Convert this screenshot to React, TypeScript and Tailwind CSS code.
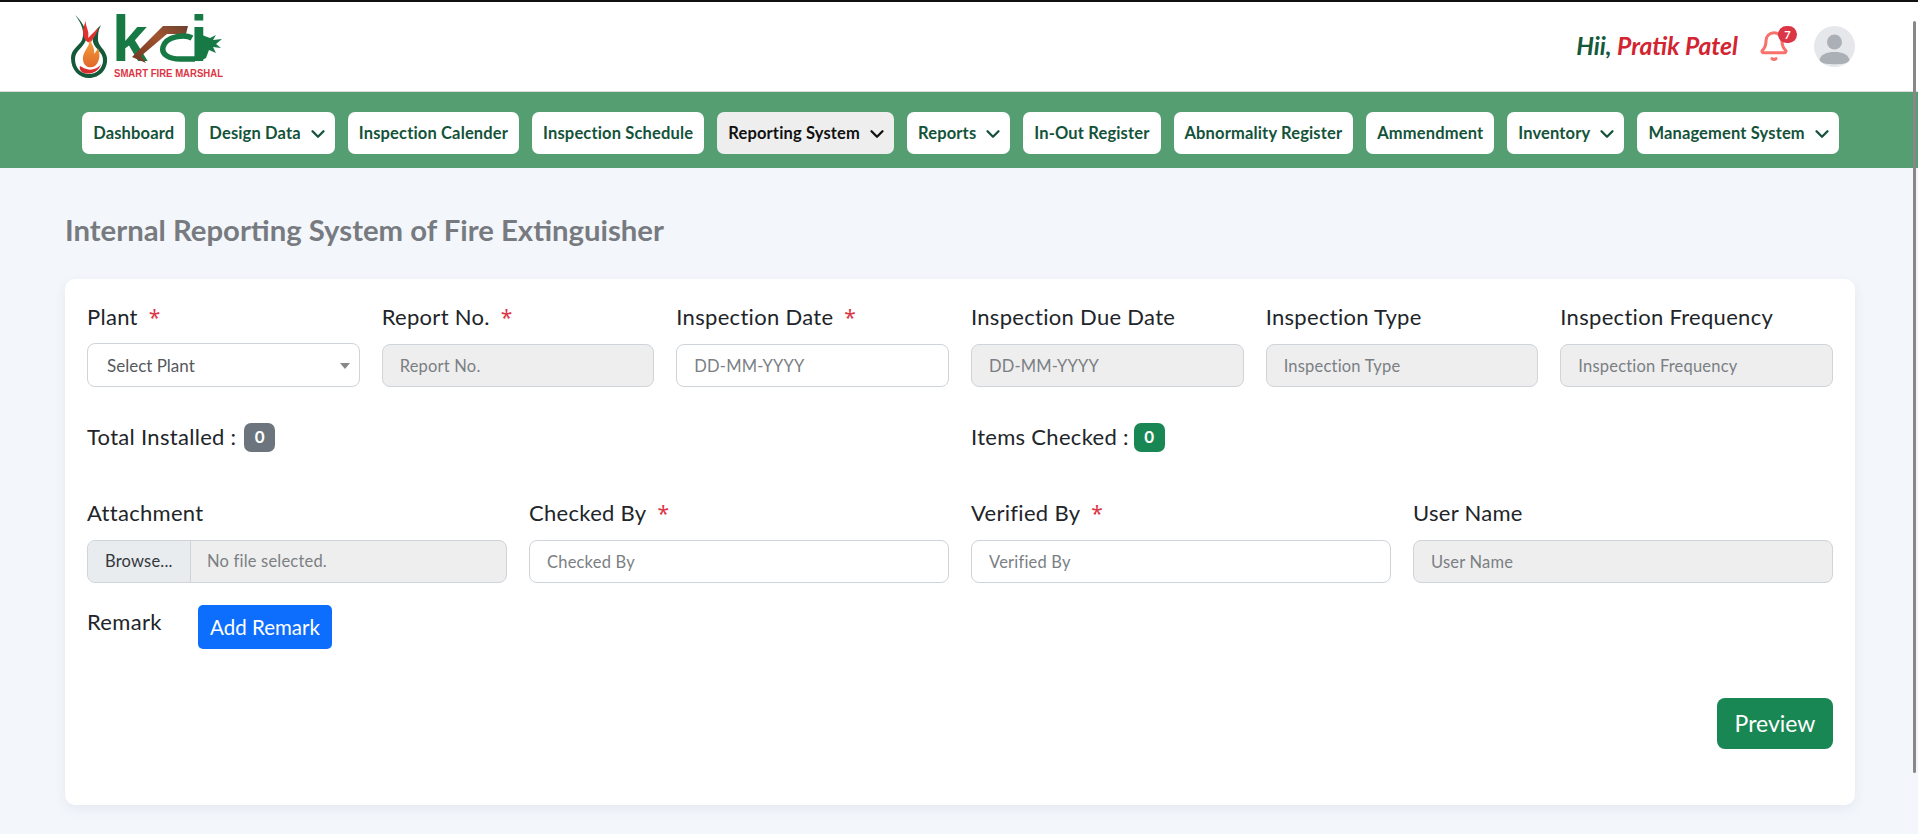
import React from 'react';
import { ChevronDown } from 'lucide-react';

const navItems = [
  { label: 'Dashboard' },
  { label: 'Design Data', caret: true },
  { label: 'Inspection Calender' },
  { label: 'Inspection Schedule' },
  { label: 'Reporting System', caret: true, active: true },
  { label: 'Reports', caret: true },
  { label: 'In-Out Register' },
  { label: 'Abnormality Register' },
  { label: 'Ammendment' },
  { label: 'Inventory', caret: true },
  { label: 'Management System', caret: true },
];

function Star() {
  return <span className="font-['Noto_Sans',sans-serif] text-[#dc3545] text-[21px] ml-[11px] tracking-normal">*</span>;
}

function Field({ label, required, placeholder, disabled }: { label: string; required?: boolean; placeholder: string; disabled?: boolean }) {
  return (
    <div>
      <label className="block text-[22px] tracking-[0.3px] leading-[30px] text-[#212529] mb-[12px]">
        {label}
        {required && <Star />}
      </label>
      <input
        readOnly
        placeholder={placeholder}
        className={`w-full h-[43px] rounded-[8px] border border-[#ced4da] px-[17px] text-[16.5px] tracking-[0.2px] outline-none placeholder:text-[#7b7f84] ${disabled ? 'bg-[#eeeeee]' : 'bg-white'}`}
      />
    </div>
  );
}

function Logo() {
  return (
    <svg width="156" height="78" viewBox="0 0 156 78" overflow="visible">
      <defs>
        <linearGradient id="brown" x1="0" y1="1" x2="1" y2="0">
          <stop offset="0" stopColor="#6f3524" />
          <stop offset="0.6" stopColor="#a0552f" />
          <stop offset="1" stopColor="#6b4030" />
        </linearGradient>
        <linearGradient id="orange" x1="0" y1="1" x2="0" y2="0">
          <stop offset="0" stopColor="#e0682a" />
          <stop offset="1" stopColor="#f4a03a" />
        </linearGradient>
      </defs>
      {/* flame */}
      <path d="M5 13 C12 22 15 30 12 38 C9 44 1 47 1 56 C1 68 9 76 19 76 C30 76 38 67 37 56 C36 47 27 44 28 36 C28 30 29 27 31 23 C25 28 22 34 23 40 C25 47 33 50 33 58 C33 66 27 72 19 72 C11 72 5 66 5 57 C5 49 13 46 16 38 C18 30 13 20 5 13Z" fill="#14593a" />
      <path d="M16 15 C14 24 20 28 18 36 C21 33 24 30 29 25 C27 31 24 35 21 40 C17 42 13 36 13 30 C13 24 16 21 16 15Z" fill="#e0322f" />
      <path d="M20 38 C23 44 25 48 24 52 C26 50 27 48 28 46 C31 54 29 60 25 64 C20 67 14 65 13 58 C12 50 19 46 20 38Z" fill="url(#orange)" />
      <path d="M10 64 C14 66 18 69 24 67 C27 66 29 65 31 62 C29 70 20 73 14 71 C11 70 9 67 10 64Z" fill="#d72f2f" />
      {/* wordmark */}
      <text x="42" y="59" fontFamily="Liberation Sans, sans-serif" fontWeight="700" fontSize="64" fill="#177a45">k</text>
      <path d="M62 55 L93 24 L118 24 L116 32 L97 32 L71 54 L76 61Z" fill="url(#brown)" />
      <path d="M122 36 C115 32 96 34 93 45 C91 53 100 57 110 57 L125 57" fill="none" stroke="#177a45" strokeWidth="5.500" />
      <text x="120" y="59" fontFamily="Liberation Sans, sans-serif" fontWeight="700" fontSize="64" fill="#177a45">i</text>
      <path d="M132 33 L140 36 L146 33 L143 38 L152 37 L146 42 L151 46 L143 45 L146 51 L139 48 L136 56 L132 58Z" fill="#177a45" />
      <text x="44" y="75" fontFamily="Liberation Sans, sans-serif" fontWeight="700" fontSize="10" fill="#dc3545" textLength="109" lengthAdjust="spacingAndGlyphs">SMART FIRE MARSHAL</text>
    </svg>
  );
}

export default function App() {
  return (
    <div className="min-h-screen bg-[#f3f6fb] font-['Lato',sans-serif]">
      <div className="h-[2px] bg-[#111]" />
      <header className="h-[90px] bg-white flex items-start justify-between pl-[70px] pr-[63px] border-b border-[#d9dedb]">
        <Logo />
        <div className="flex items-center h-[88px]">
          <span className="text-[24.7px] font-bold italic text-[#14593a]">Hii, <span className="text-[#d32431]">Pratik Patel</span></span>
          <div className="relative ml-[20px] w-[32px] h-[32px]">
            <svg width="32" height="32" viewBox="0 0 24 24" fill="none" stroke="#f8716b" strokeWidth="2.300" strokeLinecap="round" strokeLinejoin="round">
              <path d="M10.500 21.500a1.900 1 0 0 0 3 0" />
              <path d="M3.300 15.300A1 1 0 0 0 4 17h16a1 1 0 0 0 .7-1.700C19.400 14 18 12.500 18 8A6 6 0 0 0 6 8c0 4.500-1.400 6-2.700 7.300" />
            </svg>
            <span className="absolute -top-[4px] left-[20px] w-[19px] h-[17px] rounded-full bg-[#dc3545] text-white text-[11px] font-bold leading-[17px] text-center">7</span>
          </div>
          <div className="ml-[24px] w-[41px] h-[41px] rounded-full bg-[#e5e7ea] overflow-hidden">
            <svg width="41" height="41" viewBox="0 0 41 41">
              <circle cx="20.500" cy="16" r="7.500" fill="#aab0b5" />
              <path d="M5 36 C6 28 13 26 20.500 26 C28 26 35 28 36 36 C30 39 11 39 5 36Z" fill="#aab0b5" />
            </svg>
          </div>
        </div>
      </header>

      <nav className="h-[76px] bg-[#549e72] flex items-start justify-center gap-[13px] pt-[20px] pl-[3px]">
        {navItems.map(item => (
          <div
            key={item.label}
            className={`h-[42px] rounded-[7px] px-[11px] pt-[1px] flex items-center text-[16.500px] tracking-[0.15px] font-bold whitespace-nowrap ${item.active ? 'bg-[#eeeeee] text-[#111]' : 'bg-white text-[#14533a]'}`}
          >
            {item.label}
            {item.caret && <ChevronDown size={22} strokeWidth={2.5} className="ml-[6px] -mr-[5px]" />}
          </div>
        ))}
      </nav>

      <main className="pl-[65px] pr-[63px] pb-[29px]">
        <h1 className="pt-[43px] text-[29.300px] leading-[38px] font-bold text-[#777b80] mb-[30px]">Internal Reporting System of Fire Extinguisher</h1>
        <div className="bg-white rounded-[10px] shadow-[0_4px_12px_rgba(60,80,120,0.07)] h-[526px] px-[22px] pt-[23px] flex flex-col">
          <div className="grid grid-cols-6 gap-x-[22px]">
            <div>
              <label className="block text-[22px] tracking-[0.3px] leading-[30px] text-[#212529] mb-[11px]">
                Plant<Star />
              </label>
              <div className="relative h-[44px] rounded-[8px] border border-[#ced4da] bg-white pl-[19px] pt-[1px] flex items-center text-[17px] text-[#55595c]">
                Select Plant
                <span className="absolute right-[9px] top-[19px] border-x-[5px] border-x-transparent border-t-[6px] border-t-[#888]" />
              </div>
            </div>
            <Field label="Report No." required placeholder="Report No." disabled />
            <Field label="Inspection Date" required placeholder="DD-MM-YYYY" />
            <Field label="Inspection Due Date" placeholder="DD-MM-YYYY" disabled />
            <Field label="Inspection Type" placeholder="Inspection Type" disabled />
            <Field label="Inspection Frequency" placeholder="Inspection Frequency" disabled />
          </div>

          <div className="grid grid-cols-2 gap-x-[22px] mt-[35px] text-[22px] tracking-[0.3px] text-[#212529] leading-[30px]">
            <div className="flex items-center">
              Total Installed :
              <span className="ml-[8px] w-[31px] h-[29px] rounded-[7px] bg-[#6c757d] text-white text-[17px] font-bold flex items-center justify-center">0</span>
            </div>
            <div className="flex items-center">
              Items Checked :
              <span className="ml-[5px] w-[31px] h-[29px] rounded-[7px] bg-[#198754] text-white text-[17px] font-bold flex items-center justify-center">0</span>
            </div>
          </div>

          <div className="grid grid-cols-4 gap-x-[22px] mt-[46px]">
            <div>
              <label className="block text-[22px] tracking-[0.3px] leading-[30px] text-[#212529] mb-[12px]">Attachment</label>
              <div className="h-[43px] rounded-[8px] border border-[#ced4da] bg-[#eeeeee] flex items-center text-[16.5px] tracking-[0.2px] overflow-hidden">
                <span className="h-full w-[103px] pl-[17px] flex items-center bg-[#e9ecef] border-r border-[#ced4da] text-[#33373b]">Browse...</span>
                <span className="pl-[16px] text-[#7b7f84]">No file selected.</span>
              </div>
            </div>
            <Field label="Checked By" required placeholder="Checked By" />
            <Field label="Verified By" required placeholder="Verified By" />
            <Field label="User Name" placeholder="User Name" disabled />
          </div>

          <div className="flex items-start mt-[22px]">
            <span className="text-[22px] tracking-[0.3px] leading-[30px] text-[#212529] w-[111px] pt-[2px]">Remark</span>
            <button className="h-[44px] w-[134px] rounded-[5px] bg-[#0d6efd] text-white text-[20.500px]">Add Remark</button>
          </div>

          <div className="flex justify-end mt-[49px]">
            <button className="h-[51px] w-[116px] rounded-[8px] bg-[#198754] text-white text-[23px]">Preview</button>
          </div>
        </div>
      </main>

      <div className="fixed right-[2px] top-[21px] w-[3px] h-[752px] rounded-full bg-[#888]" />
    </div>
  );
}
